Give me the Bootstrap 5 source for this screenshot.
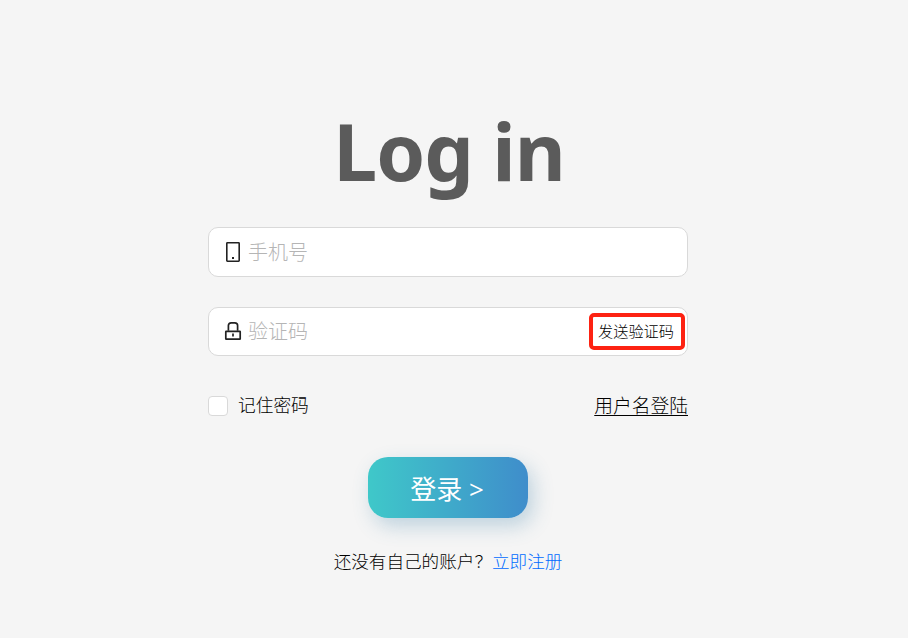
<!DOCTYPE html>
<html lang="zh-CN">
<head>
<meta charset="utf-8">
<meta name="viewport" content="width=device-width, initial-scale=1">
<title>Log in</title>
<link href="https://cdn.jsdelivr.net/npm/bootstrap@5.3.0/dist/css/bootstrap.min.css" rel="stylesheet">
<style>
body { background: #f5f5f5; color: #000; font-family: "Open Sans", "Noto Sans CJK SC", sans-serif; font-weight: 300; }
.login-panel { width: 480px; margin-left: 208px; padding-top: 97px; }
.login-title { font-family: "Noto Sans", sans-serif; font-size: 78.5px; line-height: 108px; font-weight: 700; color: #5b5b5b; margin: 0 0 22px; letter-spacing: -1px; padding-left: 2px; }
.field { height: 50px; background: #fff; border: 1px solid #d9d9d9; border-radius: 10px; padding: 0 2px 0 14px; }
.field-code { height: 49px; margin-top: 30px; }
.field svg { flex: none; }
.field input { font-size: 20px; line-height: 28px; font-weight: 300; padding: 2px 0 0; margin-left: 5px; min-width: 0; }
.field-code input { padding-top: 1px; }
.field input::placeholder { color: #b5b5b5; opacity: 1; }
.send-btn { width: 96px; height: 37px; margin-bottom: 1px; padding: 0 2px 0 0; border: 4px solid #fd2212; border-radius: 5px; font-size: 15.2px; line-height: 28px; font-weight: 300; color: #000; white-space: nowrap; }
.options { margin-top: 36px; height: 28px; }
.options .form-check-input { width: 20px; height: 20px; border: 1px solid #d9d9d9; border-radius: 4px; margin: 0 10px 0 0; float: none; }
.options label { font-size: 17.7px; line-height: 26px; padding-bottom: 2px; }
.user-link { font-size: 18.75px; line-height: 28px; color: #000; text-underline-offset: 2px; }
.login-btn { width: 160px; height: 61px; margin-top: 37px; padding: 3px 2px 0 0; border: 0; border-radius: 20px; background: linear-gradient(90deg, #3fc8c9, #3f8dcb); color: #fff; font-size: 26px; line-height: 58px; font-weight: 400; box-shadow: 5px 8px 20px rgba(63, 130, 170, .3); }
.register { margin-top: 29px; font-size: 17.6px; line-height: 28px; color: #000; }
.register a { color: #006aff; }
</style>
</head>
<body>
<main class="login-panel d-flex flex-column">
  <h1 class="login-title text-center">Log in</h1>
  <form class="d-flex flex-column">
    <div class="field d-flex align-items-center">
      <svg width="20" height="22" viewBox="0 0 20 22" fill="none" stroke="#222" stroke-width="1.6"><rect x="3.8" y="1.8" width="12.4" height="18.4" rx=".6"/><path d="M9 17h2" stroke-width="2"/></svg>
      <input class="form-control border-0 bg-transparent shadow-none" type="text" placeholder="手机号" aria-label="手机号">
    </div>
    <div class="field field-code d-flex align-items-center">
      <svg width="20" height="22" viewBox="0 0 20 22" fill="none" stroke="#222" stroke-width="1.7"><rect x="2.8" y="10.3" width="14.4" height="7.9" rx=".4"/><path d="M5.4 9.8V4.6Q5.4 1.8 8.2 1.8h3.6q2.8 0 2.8 2.8v5.2M10 12.5v3"/></svg>
      <input class="form-control border-0 bg-transparent shadow-none flex-grow-1" type="text" placeholder="验证码" aria-label="验证码">
      <button class="btn send-btn flex-shrink-0" type="button">发送验证码</button>
    </div>
    <div class="options d-flex justify-content-between align-items-center">
      <div class="d-flex align-items-center">
        <input class="form-check-input" type="checkbox" id="remember">
        <label for="remember">记住密码</label>
      </div>
      <a class="user-link" href="#">用户名登陆</a>
    </div>
    <button class="btn login-btn align-self-center" type="button">登录 &gt;</button>
    <p class="register text-center mb-0">还没有自己的账户？<a class="text-decoration-none" href="#">立即注册</a></p>
  </form>
</main>
<script src="https://cdn.jsdelivr.net/npm/bootstrap@5.3.0/dist/js/bootstrap.bundle.min.js"></script>
</body>
</html>
